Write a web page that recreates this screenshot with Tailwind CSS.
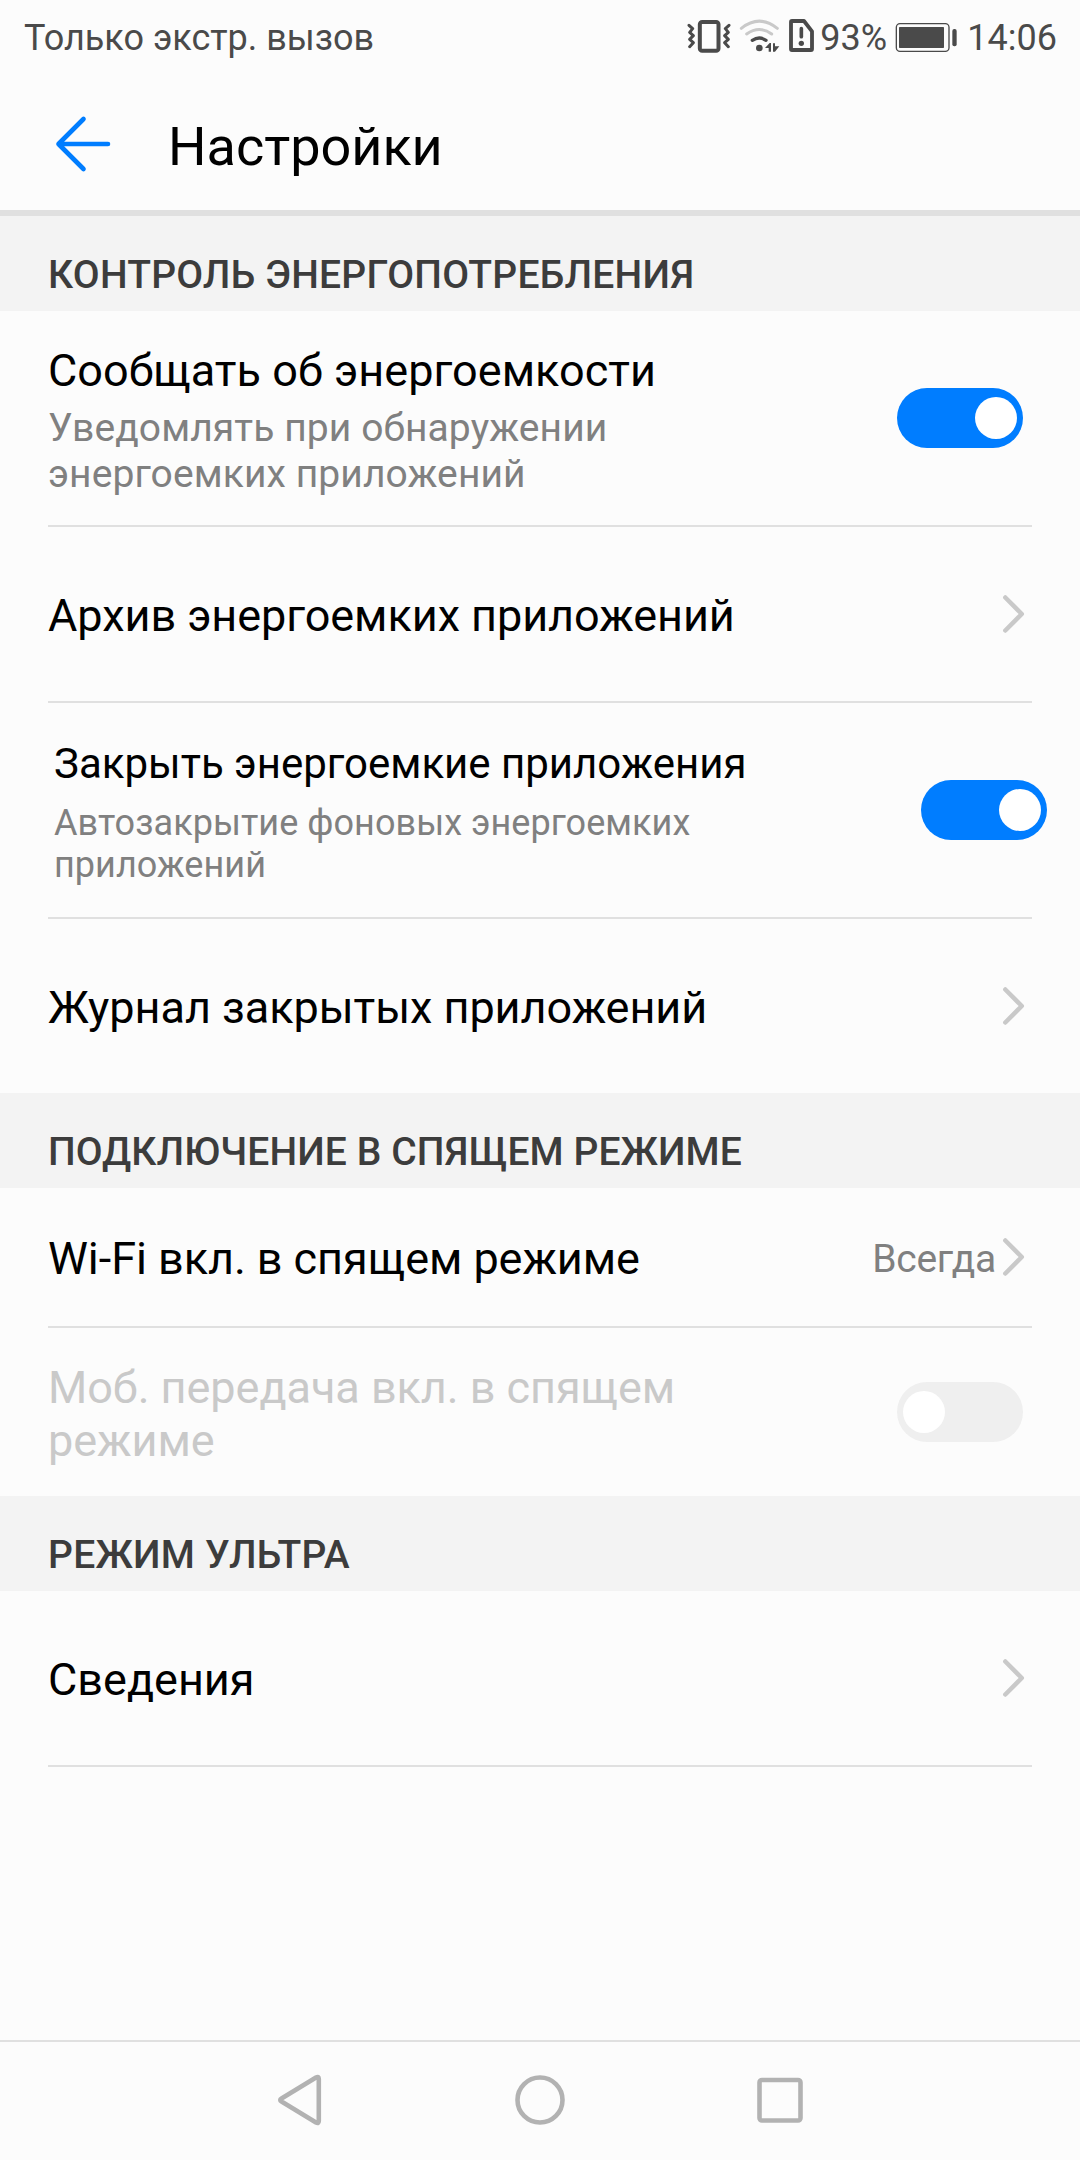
<!DOCTYPE html>
<html lang="ru">
<head>
<meta charset="utf-8">
<title>Настройки</title>
<script src="https://cdn.jsdelivr.net/npm/@tailwindcss/browser@4"></script>
</head>
<body class="bg-[#fcfcfc]">
<div class="flex h-[2160px] w-[1080px] flex-col overflow-hidden bg-[#fcfcfc] font-[Roboto,sans-serif] text-black">

  <!-- Status bar -->
  <div class="flex h-[72px] shrink-0 items-center justify-between pr-[23px] pl-[24px] text-[36px] leading-[42px] text-[#4a4a4a]">
    <span class="pt-[4px]">Только экстр. вызов</span>
    <div class="flex items-center">
      <svg class="mr-[7px] h-[36px] w-[44px]" viewBox="51 54 132 108" fill="none" stroke="#4a4a4a">
        <rect x="89.500" y="66" width="56" height="86.500" rx="7" stroke-width="12"/>
        <path d="M57 76 68 86 59 97 70 107 59 118 70 128 59 140M177 76 166 86 175 97 164 107 175 118 164 128 175 140" stroke-width="9" stroke-linecap="round" stroke-linejoin="round"/>
      </svg>
      <svg class="mr-[8px] h-[36px] w-[42px]" viewBox="204 54 126 108" fill="none" stroke-width="9" stroke-linecap="round">
        <path d="M214 85Q268 42 322 85M230 102Q268 75 305 102" stroke="#c9c9c9"/>
        <path d="M247 121Q268 107 288 121" stroke="#4a4a4a" stroke-width="10"/>
        <circle cx="268" cy="144" r="10" fill="#4a4a4a"/>
        <path d="M285 144 299 129H303V155H296V144ZM309 130H315V139H328L315 155H309Z" fill="#4a4a4a"/>
      </svg>
      <svg class="mr-[5px] h-[36px] w-[27px]" viewBox="354 54 81 108" fill="none" stroke="#4a4a4a">
        <path d="M363 65V147Q363 150 366 150H423Q426 150 426 147V94L402 63H366Q363 63 363 66Z" stroke-width="11.500" stroke-linejoin="round"/>
        <path d="M394 86V110" stroke-width="11" stroke-linecap="round"/>
        <circle cx="394" cy="130" r="8" fill="#4a4a4a" stroke="none"/>
      </svg>
      <span class="w-[75px] pt-[4px]">93%</span>
      <svg class="mr-[9px] h-[36px] w-[63px]" viewBox="675 54 189 108" fill="none">
        <rect x="679" y="71" width="158" height="83" rx="11" stroke="#4a4a4a" stroke-width="4"/>
        <rect x="687" y="81" width="135" height="63" rx="2" fill="#4a4a4a"/>
        <rect x="847" y="87" width="13" height="52" rx="6" fill="#4a4a4a"/>
      </svg>
      <span class="pt-[4px]">14:06</span>
    </div>
  </div>

  <!-- App bar -->
  <header class="flex h-[144px] shrink-0 items-center border-b-[6px] border-[#e0e0e0] pl-[54px]">
    <svg class="mt-[6px] h-[60px] w-[60px]" viewBox="0 0 60 60" fill="none" stroke="#007dff" stroke-width="4.600" stroke-linecap="round" stroke-linejoin="round"><path d="M54 30H4.500M29.500 5 4.500 30 29.500 55"/></svg>
    <h1 class="ml-[54px] pt-[11px] text-[54px] leading-[64px]">Настройки</h1>
  </header>

  <main class="flex flex-1 flex-col">
    <h2 class="h-[95px] bg-[#f3f3f3] px-[48px] pt-[36px] text-[39px] leading-[46px] font-medium tracking-[0.23px] text-[#3c3c3c]">КОНТРОЛЬ ЭНЕРГОПОТРЕБЛЕНИЯ</h2>
    <div class="mx-[48px] flex h-[216px] items-start justify-between border-b-2 border-[#e0e0e0]">
      <div class="w-[660px] pt-[33px]">
        <div class="text-[45px] leading-[53px] tracking-[0.05px]">Сообщать об энергоемкости</div>
        <div class="mt-[8px] text-[39px] leading-[46px] tracking-[0.1px] text-[#808080]">Уведомлять при обнаружении<br>энергоемких приложений</div>
      </div>
      <div class="mt-[77px] mr-[9px] flex h-[60px] w-[126px] items-center justify-end rounded-full bg-[#007dff] px-[6px]"><div class="size-[42px] rounded-full bg-white"></div></div>
    </div>
    <div class="mx-[48px] flex h-[176px] items-center justify-between border-b-2 border-[#e0e0e0]">
      <span class="pt-[3px] text-[45px] leading-[53px] tracking-[-0.05px]">Архив энергоемких приложений</span>
      <svg class="mr-[6px] h-[42px] w-[26px]" viewBox="0 0 26 42" fill="none" stroke="#c9c9c9" stroke-width="4.500" stroke-linecap="round" stroke-linejoin="round"><path d="M5.300 4.500 21.800 21 5.300 37.500"/></svg>
    </div>
    <div class="mx-[48px] flex h-[216px] items-start justify-between border-b-2 border-[#e0e0e0] pl-[6px]">
      <div class="w-[700px] pt-[36px]">
        <div class="text-[42px] leading-[49px]">Закрыть энергоемкие приложения</div>
        <div class="mt-[14px] text-[36px] leading-[42px] tracking-[0.06px] text-[#808080]">Автозакрытие фоновых энергоемких<br>приложений</div>
      </div>
      <div class="mt-[77px] -mr-[15px] flex h-[60px] w-[126px] items-center justify-end rounded-full bg-[#007dff] px-[6px]"><div class="size-[42px] rounded-full bg-white"></div></div>
    </div>
    <div class="mx-[48px] flex h-[174px] items-center justify-between">
      <span class="pt-[3px] text-[45px] leading-[53px] tracking-[-0.05px]">Журнал закрытых приложений</span>
      <svg class="mr-[6px] h-[42px] w-[26px]" viewBox="0 0 26 42" fill="none" stroke="#c9c9c9" stroke-width="4.500" stroke-linecap="round" stroke-linejoin="round"><path d="M5.300 4.500 21.800 21 5.300 37.500"/></svg>
    </div>

    <h2 class="h-[95px] bg-[#f3f3f3] px-[48px] pt-[36px] text-[39px] leading-[46px] font-medium tracking-[0.08px] text-[#3c3c3c]">ПОДКЛЮЧЕНИЕ В СПЯЩЕМ РЕЖИМЕ</h2>
    <div class="mx-[48px] flex h-[140px] items-center border-b-2 border-[#e0e0e0]">
      <span class="flex-1 pt-[3px] text-[45px] leading-[53px] tracking-[-0.05px]">Wi-Fi вкл. в спящем режиме</span>
      <span class="pt-[3px] text-[39px] leading-[46px] tracking-[-0.3px] text-[#808080]">Всегда</span>
      <svg class="mr-[6px] ml-[4px] h-[42px] w-[26px]" viewBox="0 0 26 42" fill="none" stroke="#c9c9c9" stroke-width="4.500" stroke-linecap="round" stroke-linejoin="round"><path d="M5.300 4.500 21.800 21 5.300 37.500"/></svg>
    </div>
    <div class="mx-[48px] flex h-[168px] items-center justify-between">
      <div class="pt-[3px] text-[45px] leading-[53px] tracking-[-0.05px] text-[#c9c9c9]">Моб. передача вкл. в спящем<br>режиме</div>
      <div class="mr-[9px] flex h-[60px] w-[126px] items-center rounded-full bg-[#efefef] px-[6px]"><div class="size-[42px] rounded-full bg-white"></div></div>
    </div>

    <h2 class="h-[95px] bg-[#f3f3f3] px-[48px] pt-[36px] text-[39px] leading-[46px] font-medium tracking-[0.25px] text-[#3c3c3c]">РЕЖИМ УЛЬТРА</h2>
    <div class="mx-[48px] flex h-[176px] items-center justify-between border-b-2 border-[#e0e0e0]">
      <span class="pt-[3px] text-[45px] leading-[53px]">Сведения</span>
      <svg class="mr-[6px] h-[42px] w-[26px]" viewBox="0 0 26 42" fill="none" stroke="#c9c9c9" stroke-width="4.500" stroke-linecap="round" stroke-linejoin="round"><path d="M5.300 4.500 21.800 21 5.300 37.500"/></svg>
    </div>
  </main>

  <!-- System navigation -->
  <nav class="flex h-[120px] shrink-0 items-center justify-center gap-[180px] border-t-2 border-[#e0e0e0]">
    <svg class="size-[60px]" viewBox="0 0 60 60" fill="none" stroke="#b2b2b2" stroke-width="4.600" stroke-linejoin="round"><path d="M48.800 8Q48.800 5 46 6.500L11.500 27.500Q9 29 11.500 30.500L46 51.500Q48.800 53 48.800 50Z"/></svg>
    <svg class="size-[60px]" viewBox="0 0 60 60" fill="none" stroke="#b2b2b2" stroke-width="4.600"><circle cx="30" cy="29" r="22.500"/></svg>
    <svg class="size-[60px]" viewBox="0 0 60 60" fill="none" stroke="#b2b2b2" stroke-width="4.600"><rect x="9.500" y="9" width="41" height="40.500" rx="2.500"/></svg>
  </nav>
</div>
</body>
</html>
